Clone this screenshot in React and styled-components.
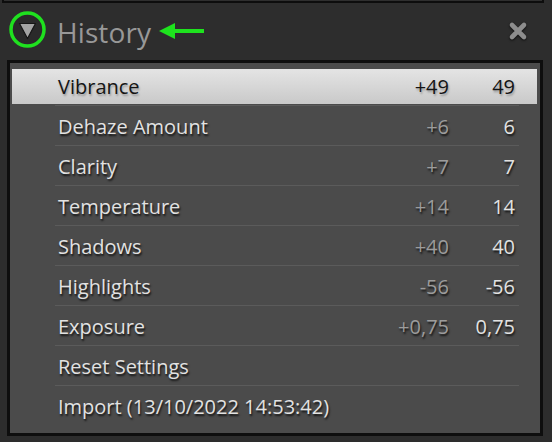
import React from "react";
import styled, { createGlobalStyle } from "styled-components";

const Global = createGlobalStyle`
  html, body { margin: 0; padding: 0; background: #2d2d2d; }
  body { font-family: "Open Sans", "Noto Sans", sans-serif; }
`;

const Page = styled.div`
  width: 552px;
  height: 442px;
  background: #2d2d2d;
  overflow: hidden;
`;

const TopFrame = styled.div`
  box-sizing: border-box;
  margin-left: 2px;
  width: 542px;
  height: 3px;
  border: 2px solid #0d0d0d;
  border-top: none;
  background: #2f2f2f;
`;

const Header = styled.div`
  height: 57px;
  display: flex;
  align-items: center;
  padding: 0 16px 0 9px;
`;

const Toggle = styled.svg`
  width: 37px;
  height: 37px;
  flex: none;
  margin-top: -4px;
`;

const Title = styled.div`
  margin-left: 11px;
  font-size: 28px;
  color: #989898;
  letter-spacing: 0.1px;
`;

const Arrow = styled.svg`
  width: 46px;
  height: 20px;
  margin-left: 8px;
  margin-top: -2px;
  flex: none;
`;

const Spacer = styled.div`
  flex: 1;
`;

const Close = styled.svg`
  width: 20px;
  height: 20px;
  margin-right: 8px;
  margin-top: -2px;
  filter: drop-shadow(0 1px 1px rgba(0, 0, 0, 0.7));
`;

const Panel = styled.div`
  box-sizing: border-box;
  margin-left: 7px;
  width: 536px;
  height: 376px;
  border: 3px solid #0e0e0e;
  background: #4b4b4b;
  padding: 3px 3px 7px 2px;
`;

const Row = styled.div`
  height: 40px;
  display: flex;
  background: ${(p) =>
    p.$selected
      ? "linear-gradient(to bottom, transparent 3px, #e4e4e4 3px, #c9c9c9 calc(100% - 2px), transparent calc(100% - 2px))"
      : "none"};
`;

const RowInner = styled.div`
  flex: 1;
  margin-left: 43px;
  margin-right: 18px;
  border-bottom: ${(p) => (p.$last ? "none" : "1px solid #5b5b5b")};
  display: flex;
  align-items: center;
  padding: 1px 4px 0 3px;
  font-size: 20px;
  color: ${(p) => (p.$selected ? "#141414" : "#e2e2e2")};
  text-shadow: ${(p) =>
    p.$selected
      ? "1px 2px 2px rgba(0,0,0,0.25)"
      : "1px 2px 2px rgba(0,0,0,0.75)"};
`;

const Label = styled.span`
  flex: 1;
  white-space: nowrap;
`;

const Delta = styled.span`
  width: 80px;
  text-align: right;
  color: ${(p) => (p.$selected ? "#141414" : "#9c9c9c")};
`;

const Value = styled.span`
  width: 66px;
  text-align: right;
`;

const rows = [
  { label: "Vibrance", delta: "+49", value: "49", selected: true },
  { label: "Dehaze Amount", delta: "+6", value: "6" },
  { label: "Clarity", delta: "+7", value: "7" },
  { label: "Temperature", delta: "+14", value: "14" },
  { label: "Shadows", delta: "+40", value: "40" },
  { label: "Highlights", delta: "-56", value: "-56" },
  { label: "Exposure", delta: "+0,75", value: "0,75" },
  { label: "Reset Settings", delta: "", value: "" },
  { label: "Import (13/10/2022 14:53:42)", delta: "", value: "" },
];

export default function App() {
  return (
    <Page>
      <Global />
      <TopFrame />
      <Header>
        <Toggle viewBox="0 0 37 37">
          <circle cx="18.5" cy="18.5" r="16.5" fill="#2a2a2a" stroke="#1fe11f" strokeWidth="3.5" />
          <path d="M10.5 12.5 L26.5 12.5 L18.5 27.5 Z" fill="#a3a3a3" stroke="#151515" strokeWidth="1.2" strokeLinejoin="round" />
        </Toggle>
        <Title>History</Title>
        <Arrow viewBox="0 0 46 20">
          <path d="M0 10 L16 2 L16 8 L45 8 L45 12 L16 12 L16 18 Z" fill="#1ee31e" />
        </Arrow>
        <Spacer />
        <Close viewBox="0 0 20 20">
          <path d="M4 4 L16 16 M16 4 L4 16" stroke="#8d8d8d" strokeWidth="4.6" strokeLinecap="round" />
        </Close>
      </Header>
      <Panel>
        {rows.map((r, i) => (
          <Row key={r.label} $selected={r.selected}>
            <RowInner $selected={r.selected} $last={i === rows.length - 1}>
              <Label>{r.label}</Label>
              {r.delta !== "" && <Delta $selected={r.selected}>{r.delta}</Delta>}
              {r.value !== "" && <Value>{r.value}</Value>}
            </RowInner>
          </Row>
        ))}
      </Panel>
    </Page>
  );
}
